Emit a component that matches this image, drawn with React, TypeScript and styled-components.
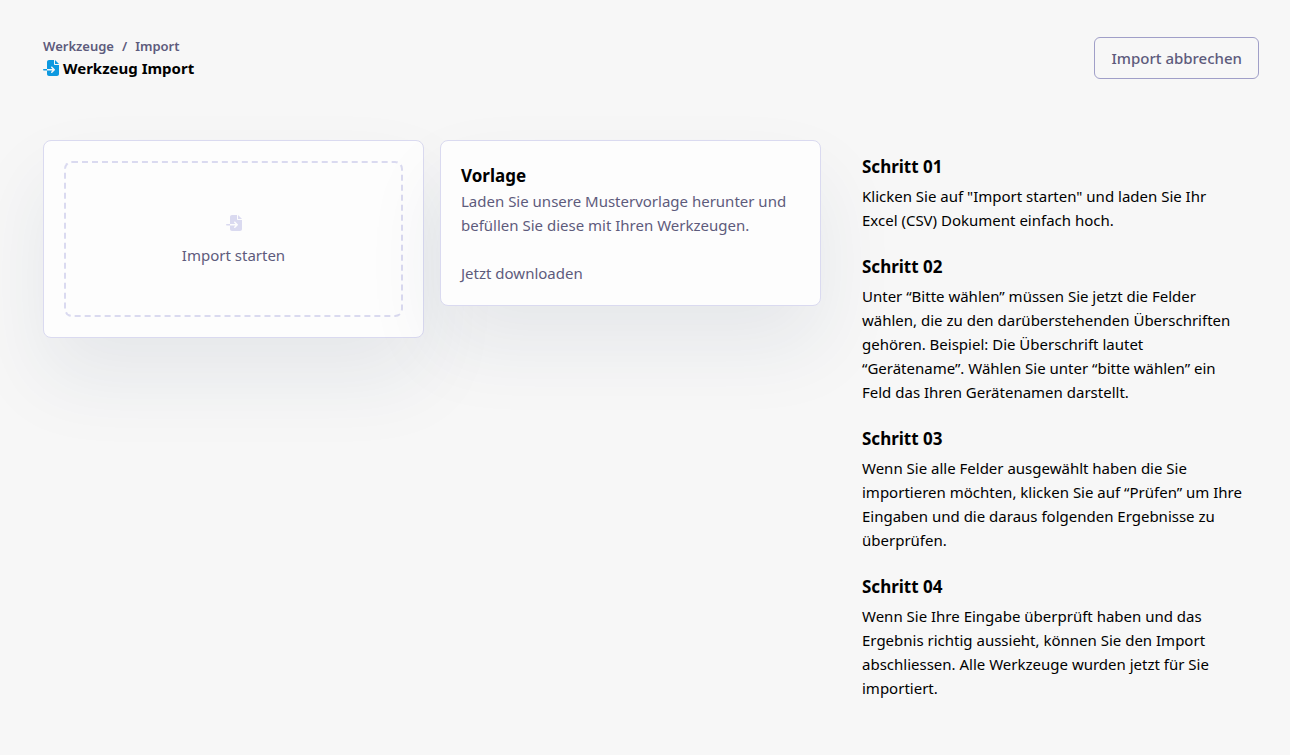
import React from "react";
import styled, { createGlobalStyle } from "styled-components";
import { FaFileImport } from "react-icons/fa6";

const GlobalStyle = createGlobalStyle`
  *, *::before, *::after { box-sizing: border-box; }
  body {
    margin: 0;
    background: #f7f7f7;
    color: #000;
    font-family: "Segoe UI", "Noto Sans", sans-serif;
    font-size: 15px;
    line-height: 24px;
  }
  h1, h2, p { margin: 0; }
  a { color: inherit; text-decoration: none; }
  button { font: inherit; cursor: pointer; }
`;

const Page = styled.div`
  padding: 36px 31px 36px 43px;
`;

const Header = styled.header`
  display: flex;
  justify-content: space-between;
  align-items: flex-start;
  margin-bottom: 60px;
`;

const Breadcrumb = styled.nav`
  display: flex;
  gap: 8px;
  color: #5d5b7c;
  font-size: 13px;
  font-weight: 600;
  line-height: 20px;
`;

const Title = styled.h1`
  display: flex;
  align-items: center;
  gap: 4px;
  font-size: 15px;
  font-weight: 700;
  line-height: 24px;

  svg { color: #0d99e0; }
`;

const CancelButton = styled.button`
  margin-top: 1px;
  padding: 8px 16px;
  border: 1px solid #a09fc8;
  border-radius: 6px;
  background: transparent;
  color: #5d5b7c;
  font-weight: 500;
`;

const Columns = styled.main`
  display: grid;
  grid-template-columns: 381fr 381fr 422fr;
  gap: 16px;
  align-items: start;
`;

const Card = styled.section`
  padding: 20px;
  border: 1px solid #dadaf0;
  border-radius: 8px;
  background: #fdfdfd;
  color: #5d5b7c;
  box-shadow: 0 40px 80px rgba(31, 45, 90, 0.08);
`;

const DropZone = styled.button`
  display: flex;
  flex-direction: column;
  align-items: center;
  justify-content: center;
  gap: 12px;
  width: 100%;
  height: 156px;
  padding: 4px 0 0;
  border: 2px dashed #dadaf0;
  border-radius: 8px;
  background: transparent;
  color: #5d5b7c;

  svg { color: #dadaf0; }
`;

const Heading = styled.h2`
  padding-top: 2px;
  color: #000;
  font-size: 17px;
  font-weight: 700;
  line-height: 26px;
`;

const DownloadLink = styled.a`
  display: block;
  margin-top: 24px;
`;

const Steps = styled.div`
  display: flex;
  flex-direction: column;
  gap: 20px;
  padding: 12px 16px 12px 25px;
`;

const Step = styled.section`
  display: flex;
  flex-direction: column;
  gap: 4px;
`;

const steps = [
  {
    title: "Schritt 01",
    text: 'Klicken Sie auf "Import starten" und laden Sie Ihr Excel (CSV) Dokument einfach hoch.',
  },
  {
    title: "Schritt 02",
    text: "Unter “Bitte wählen” müssen Sie jetzt die Felder wählen, die zu den darüberstehenden Überschriften gehören. Beispiel: Die Überschrift lautet “Gerätename”. Wählen Sie unter “bitte wählen” ein Feld das Ihren Gerätenamen darstellt.",
  },
  {
    title: "Schritt 03",
    text: "Wenn Sie alle Felder ausgewählt haben die Sie importieren möchten, klicken Sie auf “Prüfen” um Ihre Eingaben und die daraus folgenden Ergebnisse zu überprüfen.",
  },
  {
    title: "Schritt 04",
    text: "Wenn Sie Ihre Eingabe überprüft haben und das Ergebnis richtig aussieht, können Sie den Import abschliessen. Alle Werkzeuge wurden jetzt für Sie importiert.",
  },
];

export default function App() {
  return (
    <Page>
      <GlobalStyle />
      <Header>
        <div>
          <Breadcrumb aria-label="Breadcrumb">
            <a href="#werkzeuge">Werkzeuge</a>
            <span>/</span>
            <a href="#import">Import</a>
          </Breadcrumb>
          <Title>
            <FaFileImport size={16} aria-hidden />
            Werkzeug Import
          </Title>
        </div>
        <CancelButton type="button">Import abbrechen</CancelButton>
      </Header>
      <Columns>
        <Card>
          <DropZone type="button">
            <FaFileImport size={16} aria-hidden />
            Import starten
          </DropZone>
        </Card>
        <Card>
          <Heading>Vorlage</Heading>
          <p>Laden Sie unsere Mustervorlage herunter und befüllen Sie diese mit Ihren Werkzeugen.</p>
          <DownloadLink href="#download">Jetzt downloaden</DownloadLink>
        </Card>
        <Steps>
          {steps.map((step) => (
            <Step key={step.title}>
              <Heading>{step.title}</Heading>
              <p>{step.text}</p>
            </Step>
          ))}
        </Steps>
      </Columns>
    </Page>
  );
}
